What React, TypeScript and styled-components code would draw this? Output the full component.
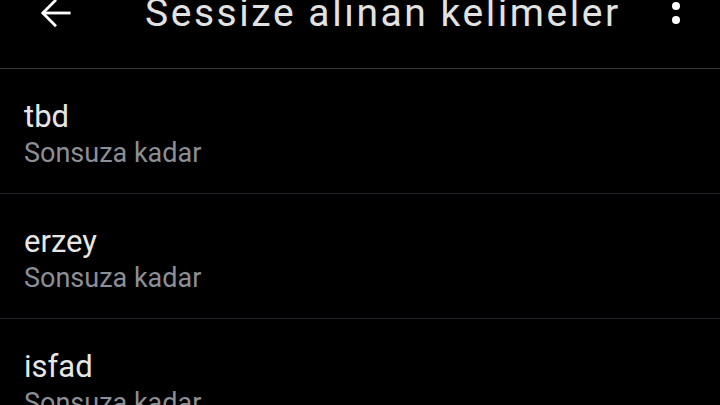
import React from "react";
import styled, { createGlobalStyle } from "styled-components";

const Global = createGlobalStyle`
  html, body { margin: 0; padding: 0; background: #000; }
  body { font-family: Roboto, "Noto Sans", sans-serif; overflow: hidden; }
`;

const Screen = styled.div`
  width: 720px;
  height: 405px;
  background: #000;
  overflow: hidden;
  display: flex;
  flex-direction: column;
`;

const Header = styled.header`
  flex-shrink: 0;
  display: flex;
  align-items: flex-start;
  border-bottom: 1px solid #3a3a3a;
  box-sizing: border-box;
  height: 69px;
`;

const HeaderInner = styled.div`
  display: flex;
  align-items: center;
  width: 100%;
  height: 32px;
  margin-top: -3px;
`;

const IconButton = styled.div`
  width: 32px;
  height: 32px;
  display: flex;
  align-items: center;
  justify-content: center;
  margin-left: 40px;
`;

const Title = styled.h1`
  margin: 0 0 0 73px;
  flex: 1;
  font-family: Roboto, sans-serif;
  font-weight: 400;
  font-size: 39px;
  letter-spacing: 2.55px;
  line-height: 32px;
  color: #e2e2e2;
  white-space: nowrap;
`;

const MoreButton = styled.div`
  width: 20px;
  display: flex;
  flex-direction: column;
  align-items: center;
  gap: 6px;
  margin-right: 34px;
  margin-top: -14px;
`;

const Dot = styled.span`
  width: 8px;
  height: 8px;
  border-radius: 50%;
  background: #fff;
`;

const List = styled.ul`
  list-style: none;
  margin: 0;
  padding: 0;
`;

const Row = styled.li`
  height: 125px;
  box-sizing: border-box;
  border-bottom: 1px solid #222226;
  padding: 30px 24px 0;
  display: flex;
  flex-direction: column;
`;

const Word = styled.div`
  font-size: 31px;
  line-height: 36px;
  color: #e6e6e6;
`;

const Duration = styled.div`
  font-size: 27px;
  line-height: 36px;
  color: #8c8f95;
`;

const BackArrow = () => (
  <svg width="34" height="34" viewBox="0 0 34 34" fill="none" stroke="#fff" strokeWidth="3">
    <path d="M4 17 H31" strokeLinecap="square" />
    <path d="M17 3 L3 17 L17 31" strokeLinejoin="miter" strokeLinecap="butt" />
  </svg>
);

const items = ["tbd", "erzey", "isfad"];

export default function App() {
  return (
    <>
      <Global />
      <Screen>
        <Header>
          <HeaderInner>
            <IconButton>
              <BackArrow />
            </IconButton>
            <Title>Sessize alınan kelimeler</Title>
            <MoreButton>
              <Dot />
              <Dot />
              <Dot />
            </MoreButton>
          </HeaderInner>
        </Header>
        <List>
          {items.map((w) => (
            <Row key={w}>
              <Word>{w}</Word>
              <Duration>Sonsuza kadar</Duration>
            </Row>
          ))}
        </List>
      </Screen>
    </>
  );
}
